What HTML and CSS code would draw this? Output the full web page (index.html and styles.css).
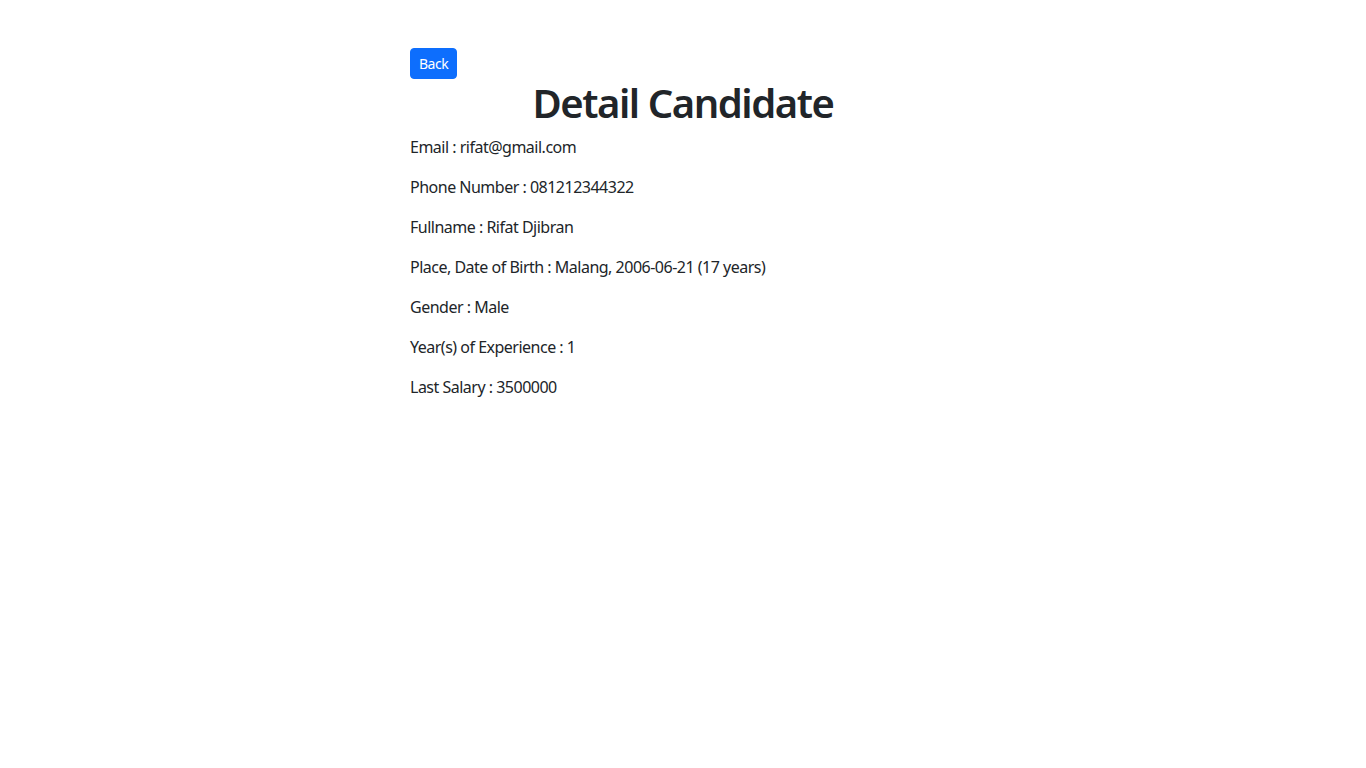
FILE: index.html
```html
<!DOCTYPE html>
<html lang="en">
<head>
<meta charset="utf-8">
<title>Detail Candidate</title>
<link rel="stylesheet" href="styles.css">
</head>
<body>
<div class="container">
  <div class="col">
    <a class="btn" href="#">Back</a>
    <h1 class="title">Detail Candidate</h1>
    <p>Email : rifat@gmail.com</p>
    <p>Phone Number : 081212344322</p>
    <p>Fullname : Rifat Djibran</p>
    <p>Place, Date of Birth : Malang, 2006-06-21 (17 years)</p>
    <p>Gender : Male</p>
    <p>Year(s) of Experience : 1</p>
    <p>Last Salary : 3500000</p>
  </div>
</div>
</body>
</html>
```

FILE: styles.css
```css
* { box-sizing: border-box; }
body {
  margin: 0;
  font-family: "Noto Sans", "Open Sans", sans-serif;
  font-size: 16px;
  line-height: 1.5;
  letter-spacing: -0.5px;
  color: #212529;
  background: #fff;
}
.container {
  max-width: 1140px;
  margin: 48px auto 0;
  padding: 0 12px;
}
.col {
  width: 546px;
  margin-left: 285px;
}
.btn {
  display: inline-block;
  background: #0d6efd;
  color: #fff;
  text-decoration: none;
  font-size: 14px;
  line-height: 21px;
  padding: 4px 8px;
  border: 1px solid #0d6efd;
  border-radius: 4px;
}
.title {
  margin: 0 0 8px;
  font-size: 40px;
  line-height: 1.2;
  font-weight: 600;
  letter-spacing: -1.45px;
  text-align: center;
}
p {
  margin: 0 0 16px;
}
```
